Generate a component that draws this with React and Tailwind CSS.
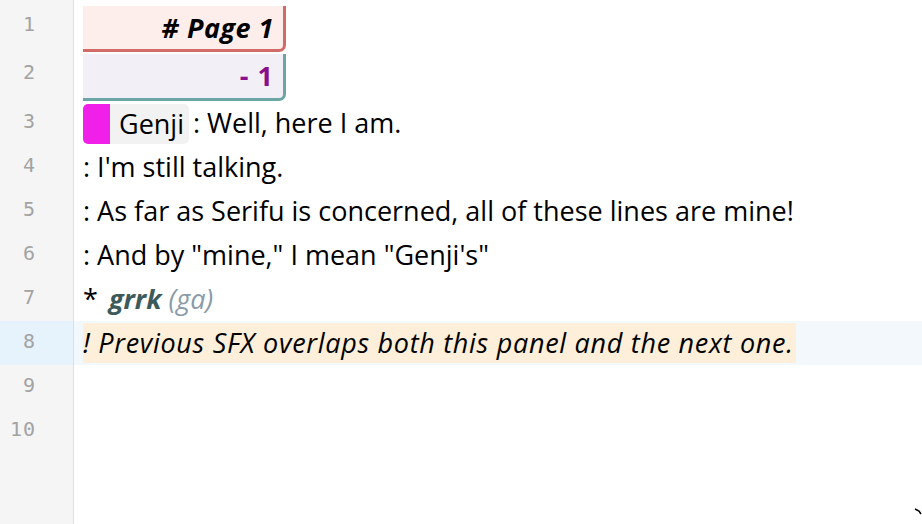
import React from "react";

const font = { fontFamily: "'Open Sans', 'Noto Sans', sans-serif" };

function Gutter({ n, h, pt, active }) {
  return (
    <div
      className={`w-[74px] shrink-0 border-r border-[#dedede] text-right pr-[37px] text-[20px] tracking-[1px] leading-[24px] text-[#a3a3a3] ${active ? "bg-[#e6f2fc]" : "bg-[#f5f5f5]"} ${h} ${pt}`}
      style={{ fontFamily: "'DejaVu Sans Mono', monospace" }}
    >
      {n}
    </div>
  );
}

export default function App() {
  return (
    <div className="w-[922px] h-[524px] overflow-hidden bg-white flex flex-col text-[27px] leading-[36px] text-black relative" style={font}>
      {/* row 1 */}
      <div className="flex">
        <Gutter n={1} h="h-[54px]" pt="pt-[12px]" />
        <div className="pl-[9px] pt-[6px]">
          <div className="w-[203px] h-[46px] bg-[#fdeeec] border-r-[3px] border-b-[3px] border-[#d26a68] rounded-br-[7px] flex items-center justify-end pr-[9px] font-bold italic text-[27px] tracking-[0.5px]">
            # Page 1
          </div>
        </div>
      </div>
      {/* row 2 */}
      <div className="flex">
        <Gutter n={2} h="h-[47px]" pt="pt-[6px]" />
        <div className="pl-[9px]">
          <div className="w-[203px] h-[47px] bg-[#f2f0f6] border-r-[3px] border-b-[3px] border-[#6aa6a6] rounded-br-[7px] flex items-center justify-end pr-[9px] font-bold text-[27px] tracking-[1px] text-[#8b0e8b]">
            - 1
          </div>
        </div>
      </div>
      {/* row 3 */}
      <div className="flex h-[44px]">
        <Gutter n={3} h="h-[44px]" pt="pt-[8px]" />
        <div className="pl-[9px] flex items-center">
          <span className="flex items-stretch h-[40px] mt-[1px]">
            <span className="w-[27px] bg-[#f020e8] rounded-l-[5px]"></span>
            <span className="bg-[#f2f2f2] rounded-r-[5px] pl-[9px] pr-[5px] flex items-center">Genji</span>
          </span>
          <span className="pl-[4px]">: Well, here I am.</span>
        </div>
      </div>
      {/* row 4 */}
      <div className="flex h-[44px]">
        <Gutter n={4} h="h-[44px]" pt="pt-[8px]" />
        <div className="pl-[9px] flex items-center">: I'm still talking.</div>
      </div>
      {/* row 5 */}
      <div className="flex h-[44px]">
        <Gutter n={5} h="h-[44px]" pt="pt-[8px]" />
        <div className="pl-[9px] flex items-center">: As far as Serifu is concerned, all of these lines are mine!</div>
      </div>
      {/* row 6 */}
      <div className="flex h-[44px]">
        <Gutter n={6} h="h-[44px]" pt="pt-[8px]" />
        <div className="pl-[9px] flex items-center">: And by "mine," I mean "Genji's"</div>
      </div>
      {/* row 7 */}
      <div className="flex h-[44px]">
        <Gutter n={7} h="h-[44px]" pt="pt-[8px]" />
        <div className="pl-[9px] flex items-center">
          <span>*&nbsp;</span>
          <span className="ml-[4px] font-bold italic text-[#3d5a5a]">grrk</span>
          <span className="italic text-[#8a9aa8]">&nbsp;(ga)</span>
        </div>
      </div>
      {/* row 8 */}
      <div className="flex h-[44px] bg-[#f3f8fd]">
        <Gutter n={8} h="h-[44px]" pt="pt-[8px]" active />
        <div className="pl-[9px] flex items-center">
          <span className="bg-[#fdefd9] h-[40px] flex items-center pr-[2px] italic tracking-[0.7px]">! Previous SFX overlaps both this panel and the next one.</span>
        </div>
      </div>
      {/* row 9 */}
      <div className="flex h-[44px]">
        <Gutter n={9} h="h-[44px]" pt="pt-[8px]" />
      </div>
      {/* row 10 */}
      <div className="flex h-[44px]">
        <Gutter n={10} h="h-[44px]" pt="pt-[8px]" />
      </div>
      <div className="flex flex-1">
        <div className="w-[74px] shrink-0 border-r border-[#dedede] bg-[#f5f5f5]"></div>
      </div>
      <svg className="absolute right-0 bottom-[8px]" width="8" height="8" viewBox="0 0 8 8">
        <path d="M1 1 L5 3 L7 6" stroke="#000" strokeWidth="1.5" fill="none" />
      </svg>
    </div>
  );
}
